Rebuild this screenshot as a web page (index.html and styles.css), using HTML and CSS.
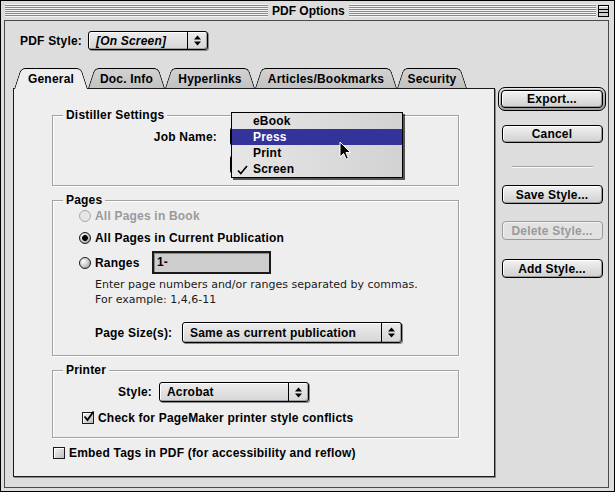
FILE: index.html
```html
<!DOCTYPE html>
<html>
<head>
<meta charset="utf-8">
<title>PDF Options</title>
<link rel="stylesheet" href="styles.css">
</head>
<body>
<div class="window">
  <div class="titlebar">
    <div class="stripes stripes-left"></div>
    <div class="title">PDF Options</div>
    <div class="stripes stripes-right"></div>
    <svg class="zoombox" width="11" height="12" viewBox="0 0 11 12">
      <rect x="0.5" y="0.5" width="10" height="11" fill="#cfcfcf" stroke="#000"/>
      <line x1="1" y1="4.5" x2="10" y2="4.5" stroke="#000"/>
      <line x1="1" y1="7.5" x2="10" y2="7.5" stroke="#000"/>
      <line x1="1" y1="1.5" x2="10" y2="1.5" stroke="#fff"/>
    </svg>
  </div>
  <div class="frame">
    <div class="style-row">
      <span class="style-label">PDF Style:</span>
      <div class="popup popup-pdfstyle">
        <span class="popup-text italic">[On Screen]</span>
        <span class="popup-arrows">
          <svg width="7" height="11" viewBox="0 0 7 11"><path d="M0 4.5 L3.5 0.5 L7 4.5 Z M0 6.5 L3.5 10.5 L7 6.5 Z" fill="#000"/></svg>
        </span>
      </div>
    </div>
    <div class="main">
      <div class="tabs-col">
        <div class="tabstrip">
          <div class="tab active tab-general">General</div>
          <div class="tab tab-docinfo">Doc. Info</div>
          <div class="tab tab-hyper">Hyperlinks</div>
          <div class="tab tab-articles">Articles/Bookmarks</div>
          <div class="tab tab-security">Security</div>
        </div>
        <div class="panel">
          <div class="group g-distiller">
            <div class="group-title">Distiller Settings</div>
            <div class="job-row">
              <span class="job-label">Job Name:</span>
              <div class="popup popup-job"></div>
            </div>
            <div class="job-row2">
              <div class="popup popup-job"></div>
            </div>
            <div class="menu">
              <div class="menu-item">eBook</div>
              <div class="menu-item selected">Press</div>
              <div class="menu-item">Print</div>
              <div class="menu-item checked">
                <svg class="menu-check" width="11" height="10" viewBox="0 0 11 10"><path d="M1 5.5 L3.8 8.5 L10 1" fill="none" stroke="#000" stroke-width="1.6"/></svg>
                Screen
              </div>
              <svg class="cursor" width="13" height="20" viewBox="0 0 13 20">
                <path d="M1 1 L1 16 L4.6 12.4 L7.2 18.2 L9.4 17.2 L6.9 11.6 L11.6 11.6 Z" fill="#000" stroke="#fff" stroke-width="1"/>
              </svg>
            </div>
          </div>

          <div class="group g-pages">
            <div class="group-title">Pages</div>
            <div class="opt opt-first disabled">
              <span class="radio radio-disabled"></span>
              <span>All Pages in Book</span>
            </div>
            <div class="opt opt-second">
              <span class="radio radio-on"></span>
              <span>All Pages in Current Publication</span>
            </div>
            <div class="opt opt-ranges">
              <span class="radio"></span>
              <span class="ranges-label">Ranges</span>
              <div class="field">1-</div>
            </div>
            <div class="help">Enter page numbers and/or ranges separated by commas.<br>For example: 1,4,6-11</div>
            <div class="size-row">
              <span class="size-label">Page Size(s):</span>
              <div class="popup popup-size">
                <span class="popup-text">Same as current publication</span>
                <span class="popup-arrows">
                  <svg width="7" height="11" viewBox="0 0 7 11"><path d="M0 4.5 L3.5 0.5 L7 4.5 Z M0 6.5 L3.5 10.5 L7 6.5 Z" fill="#000"/></svg>
                </span>
              </div>
            </div>
          </div>

          <div class="group g-printer">
            <div class="group-title">Printer</div>
            <div class="printer-row">
              <span class="printer-label">Style:</span>
              <div class="popup popup-printer">
                <span class="popup-text">Acrobat</span>
                <span class="popup-arrows">
                  <svg width="7" height="11" viewBox="0 0 7 11"><path d="M0 4.5 L3.5 0.5 L7 4.5 Z M0 6.5 L3.5 10.5 L7 6.5 Z" fill="#000"/></svg>
                </span>
              </div>
            </div>
            <div class="check-row">
              <span class="checkbox">
                <svg width="14" height="14" viewBox="0 0 14 14"><path d="M2.5 6.5 L5.5 10 L11.5 1.5" fill="none" stroke="#000" stroke-width="1.8"/></svg>
              </span>
              <span>Check for PageMaker printer style conflicts</span>
            </div>
          </div>

          <div class="embed-row">
            <span class="checkbox"></span>
            <span>Embed Tags in PDF (for accessibility and reflow)</span>
          </div>
        </div>
      </div>
      <div class="buttons">
        <div class="ring"><div class="btn">Export...</div></div>
        <div class="btn btn-cancel">Cancel</div>
        <div class="sep"></div>
        <div class="btn btn-save">Save Style...</div>
        <div class="btn btn-delete disabled-btn">Delete Style...</div>
        <div class="btn btn-add">Add Style...</div>
      </div>
    </div>
  </div>
</div>
</body>
</html>
```
FILE: styles.css
```css
* { box-sizing: border-box; }
html, body { margin: 0; padding: 0; }
body {
  font: bold 12px/14px "Liberation Sans", Arial, sans-serif;
  letter-spacing: 0.2px;
  color: #000;
  background: #dddddd;
}
.window {
  width: 615px;
  height: 492px;
  border: 1px solid #000;
  background: #dddddd;
  display: flex;
  flex-direction: column;
}
.titlebar {
  height: 19px;
  flex: none;
  display: flex;
  align-items: center;
  padding: 0 5px 0 4px;
}
.stripes {
  height: 13px;
  background: repeating-linear-gradient(to bottom, #f4f4f4 0 1px, #8a8a8a 1px 2px);
}
.stripes-left { width: 263px; flex: none; }
.stripes-right { flex: 1; }
.title { padding: 0 4px; white-space: nowrap; letter-spacing: 0; }
.zoombox { margin-left: 2px; flex: none; display: block; }

.frame {
  flex: 1;
  margin: 0 5px 3px 3px;
  border: 1px solid #4a4a4a;
  display: flex;
  flex-direction: column;
}
.style-row {
  display: flex;
  align-items: center;
  height: 19px;
  margin: 10px 0 0 15px;
}
.style-label { width: 68px; }

.popup {
  display: flex;
  align-items: center;
  border: 1px solid #000;
  border-radius: 3px;
  background: linear-gradient(to bottom, #ececec, #d6d6d6);
  box-shadow: inset 1px 1px 0 #fff, inset -1px -1px 0 #a0a0a0, 1px 1px 0 #8c8c8c;
}
.popup-text { flex: 1; padding-left: 7px; white-space: nowrap; }
.italic { font-style: italic; }
.popup-arrows {
  width: 20px;
  align-self: stretch;
  border-left: 1px solid #000;
  display: flex;
  align-items: center;
  justify-content: center;
}
.popup-arrows svg { display: block; }
.popup-pdfstyle { width: 120px; height: 19px; }
.popup-job { width: 160px; height: 19px; }
.popup-size { width: 220px; height: 21px; }
.popup-printer { width: 150px; height: 20px; }

.main { display: flex; margin-top: 18px; }
.tabs-col { margin-left: 8px; }
.tabstrip {
  display: flex;
  height: 20px;
  padding-left: 1px;
  align-items: flex-start;
}
.tab {
  position: relative;
  z-index: 0;
  height: 20px;
  padding-top: 1px;
  display: flex;
  align-items: center;
  justify-content: center;
  white-space: nowrap;
  --tab-bg: linear-gradient(to bottom, #d2d2d2, #c2c2c2);
}
.tab::before, .tab::after {
  content: "";
  position: absolute;
  top: 0;
  bottom: 0;
  width: 60%;
  border: 1px solid #000;
  border-bottom: none;
  background: var(--tab-bg);
  z-index: -1;
}
.tab::before {
  left: 0;
  border-right: none;
  border-top-left-radius: 5px;
  transform: skewX(-18deg);
  transform-origin: bottom left;
}
.tab::after {
  right: 0;
  border-left: none;
  border-top-right-radius: 5px;
  transform: skewX(18deg);
  transform-origin: bottom right;
}
.tab.active {
  z-index: 2;
  height: 21px;
  padding-bottom: 1px;
  --tab-bg: #eeeeee;
}
.tab-general { width: 74px; }
.tab-docinfo { width: 77px; }
.tab-hyper { width: 90px; }
.tab-articles { width: 142px; }
.tab-security { width: 70px; }

.panel {
  width: 482px;
  height: 389px;
  border: 1px solid #1a1a1a;
  background: #eeeeee;
  padding: 26px 0 0 38px;
  box-shadow: 1px 1px 0 #8a8a8a;
}
.group {
  position: relative;
  width: 407px;
  border: 1px solid #a2a2a2;
  box-shadow: 1px 1px 0 #fff, inset 1px 1px 0 #fff;
}
.group-title {
  width: fit-content;
  height: 14px;
  line-height: 14px;
  margin: -8px 0 0 10px;
  padding: 0 3px;
  background: #eeeeee;
}
.g-distiller { height: 71px; }
.g-pages { height: 156px; margin-top: 14px; }
.g-printer { height: 68px; margin-top: 14px; }

.job-row { display: flex; align-items: center; height: 19px; margin-top: 5px; }
.job-label { width: 164px; text-align: right; }
.job-row .popup { margin-left: 13px; }
.job-row2 { margin: 9px 0 0 177px; }

.menu {
  position: absolute;
  left: 178px;
  top: -4px;
  width: 172px;
  border: 1px solid #000;
  background: linear-gradient(to right, #e6e6e6, #d2d2d2);
  box-shadow: 2px 2px 0 rgba(0, 0, 0, 0.65);
  z-index: 5;
}
.menu-item {
  position: relative;
  height: 16px;
  line-height: 16px;
  padding-left: 21px;
}
.menu-item.selected { background: #333399; color: #fff; }
.menu-check { position: absolute; left: 5px; top: 4px; }
.cursor { position: absolute; left: 107px; top: 28px; }

.opt {
  display: flex;
  align-items: center;
  gap: 4px;
  height: 16px;
  padding-left: 26px;
}
.opt-first { margin-top: 1px; }
.opt-second { margin-top: 6px; }
.opt-ranges { margin-top: 5px; height: 23px; }
.disabled { color: #9a9a9a; }
.radio {
  width: 12px;
  height: 12px;
  flex: none;
  border-radius: 50%;
  border: 1px solid #1a1a1a;
  background: radial-gradient(circle at 35% 35%, #ffffff, #d0d0d0 45%, #8a8a8a);
}
.radio-on {
  background:
    radial-gradient(circle at center, #000 0 2.6px, transparent 3.2px),
    radial-gradient(circle at 35% 35%, #ffffff, #c8c8c8 50%, #808080);
}
.radio-disabled {
  border-color: #a8a8a8;
  background: #e6e6e6;
}
.ranges-label { width: 53px; }
.field {
  width: 119px;
  height: 23px;
  border: 2px solid #1a1a1a;
  background: #cdcdcd;
  box-shadow: inset 1px 1px 0 #8a8a8a;
  padding-left: 3px;
  line-height: 19px;
}
.help {
  margin: 3px 0 0 42px;
  font: normal 11px/15px "DejaVu Sans", Verdana, sans-serif;
  letter-spacing: 0;
  color: #1a1a1a;
}
.size-row {
  display: flex;
  align-items: center;
  height: 21px;
  margin-top: 15px;
  padding-left: 42px;
}
.size-label { width: 87px; }

.printer-row { display: flex; align-items: center; height: 20px; margin-top: 5px; }
.printer-label { width: 99px; text-align: right; }
.printer-row .popup { margin-left: 7px; }
.check-row {
  display: flex;
  align-items: center;
  gap: 4px;
  height: 16px;
  margin-top: 8px;
  padding-left: 29px;
}
.checkbox {
  position: relative;
  width: 12px;
  height: 12px;
  flex: none;
  border: 1px solid #1a1a1a;
  background: linear-gradient(135deg, #f4f4f4, #bdbdbd);
  box-shadow: inset 1px 1px 0 #fff;
}
.checkbox svg { position: absolute; left: -1px; top: -3px; }
.embed-row {
  display: flex;
  align-items: center;
  gap: 4px;
  height: 16px;
  margin: 7px 0 0 1px;
}

.buttons {
  width: 108px;
  margin: 19px 0 0 3px;
  display: flex;
  flex-direction: column;
  align-items: center;
}
.ring {
  width: 108px;
  height: 24px;
  border: 1px solid #000;
  border-radius: 7px;
  padding: 2px;
  background: linear-gradient(to bottom, #c4c4c4, #9c9c9c);
  box-shadow: inset 1px 1px 0 #e8e8e8;
}
.btn {
  width: 101px;
  height: 19px;
  border: 1px solid #000;
  border-radius: 4px;
  background: linear-gradient(to bottom, #f2f2f2, #d0d0d0);
  box-shadow: inset 1px 1px 0 #fff, inset -1px -1px 0 #9a9a9a;
  display: flex;
  align-items: center;
  justify-content: center;
  white-space: nowrap;
}
.ring .btn { width: 100%; height: 18px; }
.btn-cancel { height: 18px; margin-top: 14px; }
.sep {
  width: 81px;
  height: 2px;
  margin-top: 23px;
  border-top: 1px solid #a6a6a6;
  border-bottom: 1px solid #fafafa;
}
.btn-save { margin-top: 17px; }
.btn-delete { margin-top: 17px; }
.btn-add { margin-top: 19px; }
.disabled-btn {
  color: #9a9a9a;
  border-color: #9a9a9a;
  background: #e2e2e2;
  box-shadow: inset 1px 1px 0 #f4f4f4;
}
```
